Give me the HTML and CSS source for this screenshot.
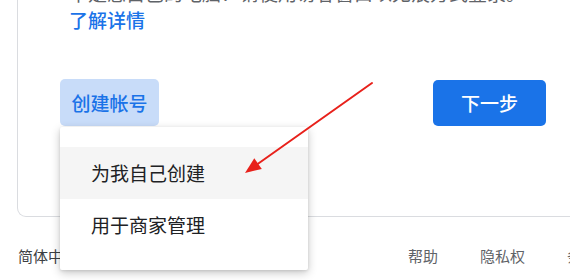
FILE: index.html
```html
<!DOCTYPE html>
<html lang="zh-CN">
<head>
<meta charset="utf-8">
<title>登录</title>
<link rel="stylesheet" href="styles.css">
</head>
<body>
<div class="page">
  <div class="card">
    <p class="desc">不是您自己的电脑？请使用访客窗口以无痕方式登录。<br><a class="link" href="#">了解详情</a></p>
    <div class="actions">
      <button class="btn-text">创建帐号</button>
      <button class="btn-primary">下一步</button>
    </div>
  </div>
  <div class="footer">
    <span class="lang">简体中文</span>
    <span class="links">
      <a href="#">帮助</a>
      <a href="#">隐私权</a>
      <a href="#">条款</a>
    </span>
  </div>
  <div class="menu">
    <div class="menu-item active">为我自己创建</div>
    <div class="menu-item">用于商家管理</div>
  </div>
  <svg class="arrow" width="570" height="280" viewBox="0 0 570 280">
    <line x1="372" y1="83" x2="258" y2="163.8" stroke="#e8211b" stroke-width="2" stroke-linecap="round"/>
    <polygon points="245,173 261.8,168.9 254.3,158.3" fill="#e8211b"/>
  </svg>
</div>
</body>
</html>
```
FILE: styles.css
```css
html, body {
  margin: 0;
  padding: 0;
  background: #ffffff;
  overflow: hidden;
}
body {
  font-family: "Noto Sans CJK SC", "Noto Sans", sans-serif;
  width: 570px;
  height: 280px;
}
.page {
  position: relative;
  width: 620px;
  height: 280px;
}
.card {
  display: flow-root;
  margin-left: 17px;
  width: 570px;
  border: 1px solid #dadce0;
  border-top: none;
  border-radius: 0 0 0 9px;
  padding: 0 0 90px 42px;
}
.desc {
  margin: -21px 0 0 9px;
  font-size: 19px;
  line-height: 27px;
  color: #5f6368;
}
.link {
  color: #1a73e8;
  font-weight: 500;
  text-decoration: none;
}
.actions {
  margin-top: 46px;
  width: 486px;
  display: flex;
  justify-content: space-between;
  align-items: center;
}
.btn-text, .btn-primary {
  height: 47px;
  border: none;
  border-radius: 5px;
  font-family: "Noto Sans CJK SC", "Noto Sans", sans-serif;
  font-size: 19px;
  font-weight: 500;
  line-height: 24px;
  cursor: pointer;
}
.btn-text {
  width: 99px;
  padding: 0;
  background: #c8dcf9;
  color: #1a73e8;
}
.btn-primary {
  width: 113px;
  height: 46px;
  padding: 0;
  background: #1a73e8;
  color: #ffffff;
}
.footer {
  display: flex;
  align-items: center;
  height: 63px;
  padding: 0 23px 0 18px;
  font-size: 15px;
  line-height: 20px;
  box-sizing: border-box;
  width: 620px;
  padding-top: 14px;
}
.lang {
  flex: 1;
  color: #3c4043;
}
.links {
  display: flex;
  gap: 42px;
}
.links a {
  color: #5f6368;
  text-decoration: none;
}
.menu {
  position: absolute;
  left: 60px;
  top: 127px;
  width: 248px;
  padding: 20px 0 19px;
  background: #ffffff;
  box-shadow: 0 3px 10px rgba(0, 0, 0, 0.22), 0 1px 3px rgba(0, 0, 0, 0.1);
  border-radius: 2px;
}
.menu-item {
  height: 52px;
  line-height: 52px;
  padding-left: 31px;
  font-size: 19px;
  color: #202124;
}
.menu-item.active {
  background: #f5f5f5;
}
.arrow {
  position: absolute;
  left: 0;
  top: 0;
  pointer-events: none;
}
```
